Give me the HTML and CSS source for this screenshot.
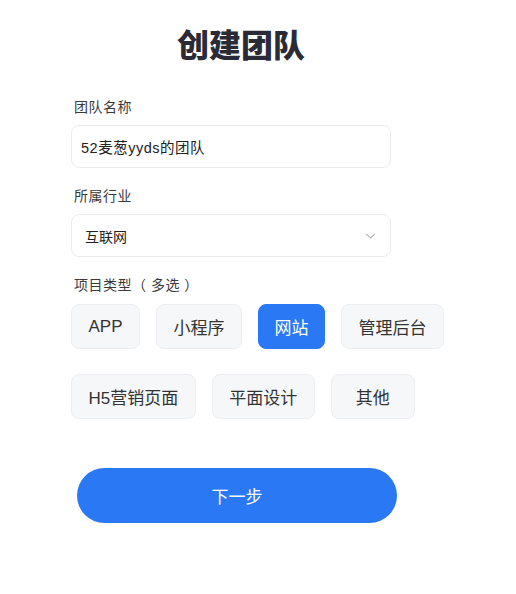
FILE: index.html
```html
<!DOCTYPE html>
<html lang="zh-CN">

<head>
    <meta charset="UTF-8">
    <meta name="viewport" content="width=device-width, initial-scale=1.0">
    <title>创建团队</title>
    <link rel="stylesheet" href="styles.css">
</head>

<body>
    <div class="page">
        <h1 class="title">创建团队</h1>

        <div class="form-group">
            <label>团队名称</label>
            <input type="text" class="field" value="52麦葱yyds的团队">
        </div>

        <div class="form-group">
            <label>所属行业</label>
            <div class="field select">
                <span>互联网</span>
                <svg class="chevron" width="11" height="6" viewBox="0 0 11 6">
                    <path d="M1 0.8 L5.5 5 L10 0.8" fill="none" stroke="#b3b6bc" stroke-width="1.1" />
                </svg>
            </div>
        </div>

        <div class="form-group">
            <label>项目类型（ 多选 ）</label>
            <div class="chips">
                <div class="chip">APP</div>
                <div class="chip">小程序</div>
                <div class="chip active">网站</div>
                <div class="chip">管理后台</div>
                <div class="chip">H5营销页面</div>
                <div class="chip">平面设计</div>
                <div class="chip chip-wide">其他</div>
            </div>
        </div>

        <button class="next">下一步</button>
    </div>
</body>

</html>
```

FILE: styles.css
```css
* {
    margin: 0;
    padding: 0;
    box-sizing: border-box;
    font-family: "Liberation Sans", "Noto Sans CJK SC", sans-serif;
}

body {
    background: white;
    color: #333;
}

.page {
    width: 340px;
    margin-left: 71px;
    padding-top: 26px;
}

.title {
    font-size: 32px;
    line-height: 40px;
    font-weight: 900;
    color: #2b2b38;
    text-align: center;
    margin-bottom: 31px;
}

.form-group {
    margin-bottom: 18px;
}

.form-group label {
    display: block;
    padding-left: 3px;
    font-size: 14px;
    line-height: 20px;
    letter-spacing: 0.5px;
    color: #3a3a3a;
    margin-bottom: 8px;
}

.field {
    width: 320px;
    height: 43px;
    border: 1px solid #ececef;
    border-radius: 8px;
    background: white;
    font-size: 14px;
    color: #222;
}

input.field {
    padding: 0 9px;
    font-size: 14.5px;
    letter-spacing: 0.5px;
    outline: none;
}

.select {
    display: flex;
    align-items: center;
    justify-content: space-between;
    padding: 0 14px 0 13px;
}

.chips {
    display: flex;
    flex-wrap: wrap;
    column-gap: 16px;
    row-gap: 25px;
    padding-top: 1px;
    width: 380px;
}

.chip {
    height: 45px;
    padding: 0 16.5px;
    display: flex;
    align-items: center;
    justify-content: center;
    border: 1px solid #eceef1;
    border-radius: 8px;
    background: #f6f7f9;
    font-size: 17px;
    color: #333;
}

.chip.active {
    background: #2b78f5;
    border-color: #2b78f5;
    padding: 0 15.5px;
    color: white;
}

.chip-wide {
    min-width: 84px;
}

.next {
    display: block;
    width: 320px;
    height: 55px;
    margin: 49px 0 0 6px;
    border: none;
    border-radius: 28px;
    background: #2b78f5;
    color: white;
    font-size: 17px;
    cursor: pointer;
}
```
